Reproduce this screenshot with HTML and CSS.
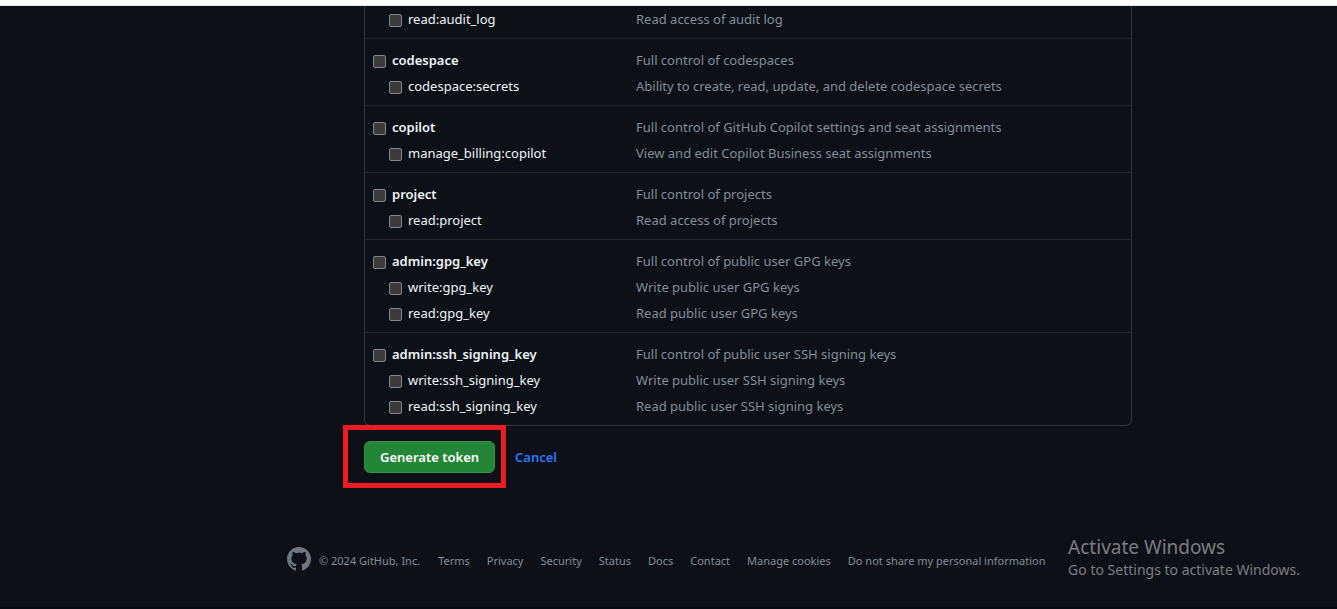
FILE: index.html
```html
<!DOCTYPE html>
<html lang="en">
<head>
<meta charset="utf-8">
<meta name="viewport" content="width=device-width, initial-scale=1">
<title>New personal access token</title>
<link rel="stylesheet" href="styles.css">
</head>
<body>
<div class="topbar"></div>
<main class="content">
<form class="token-form">
<div class="scopes">
<section class="group">
<div class="scope child"><label class="name"><input class="check" type="checkbox">read:audit_log</label><span class="desc">Read access of audit log</span></div>
</section>
<section class="group">
<div class="scope"><label class="name"><input class="check" type="checkbox">codespace</label><span class="desc">Full control of codespaces</span></div>
<div class="scope child"><label class="name"><input class="check" type="checkbox">codespace:secrets</label><span class="desc">Ability to create, read, update, and delete codespace secrets</span></div>
</section>
<section class="group">
<div class="scope"><label class="name"><input class="check" type="checkbox">copilot</label><span class="desc">Full control of GitHub Copilot settings and seat assignments</span></div>
<div class="scope child"><label class="name"><input class="check" type="checkbox">manage_billing:copilot</label><span class="desc">View and edit Copilot Business seat assignments</span></div>
</section>
<section class="group">
<div class="scope"><label class="name"><input class="check" type="checkbox">project</label><span class="desc">Full control of projects</span></div>
<div class="scope child"><label class="name"><input class="check" type="checkbox">read:project</label><span class="desc">Read access of projects</span></div>
</section>
<section class="group">
<div class="scope"><label class="name"><input class="check" type="checkbox">admin:gpg_key</label><span class="desc">Full control of public user GPG keys</span></div>
<div class="scope child"><label class="name"><input class="check" type="checkbox">write:gpg_key</label><span class="desc">Write public user GPG keys</span></div>
<div class="scope child"><label class="name"><input class="check" type="checkbox">read:gpg_key</label><span class="desc">Read public user GPG keys</span></div>
</section>
<section class="group">
<div class="scope"><label class="name"><input class="check" type="checkbox">admin:ssh_signing_key</label><span class="desc">Full control of public user SSH signing keys</span></div>
<div class="scope child"><label class="name"><input class="check" type="checkbox">write:ssh_signing_key</label><span class="desc">Write public user SSH signing keys</span></div>
<div class="scope child"><label class="name"><input class="check" type="checkbox">read:ssh_signing_key</label><span class="desc">Read public user SSH signing keys</span></div>
</section>
</div>
<div class="actions">
<div class="highlight"><button class="generate" type="button">Generate token</button></div>
<a class="cancel" href="#">Cancel</a>
</div>
</form>
</main>
<footer class="footer">
<svg class="logo" viewBox="0 0 16 16" aria-label="GitHub" role="img"><path d="M8 0c4.42 0 8 3.58 8 8a8.013 8.013 0 0 1-5.45 7.59c-.4.08-.55-.17-.55-.38 0-.27.01-1.13.01-2.2 0-.75-.25-1.23-.54-1.48 1.78-.2 3.65-.88 3.65-3.95 0-.88-.31-1.59-.82-2.15.08-.2.36-1.02-.08-2.12 0 0-.67-.22-2.2.82-.64-.18-1.32-.27-2-.27-.68 0-1.36.09-2 .27-1.53-1.03-2.2-.82-2.2-.82-.44 1.1-.16 1.92-.08 2.12-.51.56-.82 1.28-.82 2.15 0 3.06 1.86 3.75 3.64 3.95-.23.2-.44.55-.51 1.07-.46.21-1.61.55-2.33-.66-.15-.24-.6-.83-1.23-.82-.67.01-.27.38.01.53.34.19.73.9.82 1.13.16.45.68 1.31 2.69.94 0 .67.01 1.3.01 1.49 0 .21-.15.45-.55.38A7.995 7.995 0 0 1 0 8c0-4.42 3.58-8 8-8Z"/></svg>
<span class="copyright">© 2024 GitHub, Inc.</span>
<nav class="links">
<a class="link" href="#">Terms</a>
<a class="link" href="#">Privacy</a>
<a class="link" href="#">Security</a>
<a class="link" href="#">Status</a>
<a class="link" href="#">Docs</a>
<a class="link" href="#">Contact</a>
<a class="link" href="#">Manage cookies</a>
<a class="link" href="#">Do not share my personal information</a>
</nav>
</footer>
<aside class="watermark">
<div class="watermark-title">Activate Windows</div>
<div class="watermark-text">Go to Settings to activate Windows.</div>
</aside>
</body>
</html>
```
FILE: styles.css
```css
* {
  box-sizing: border-box;
}

body {
  margin: 0;
  min-height: 100vh;
  background: #0d1117;
  border-bottom: 2px solid #07090f;
  color: #f0f4f8;
  font: 13px/26px "Noto Sans", "Open Sans", sans-serif;
}

.topbar {
  height: 6px;
  background: #fff;
  border-bottom: 1px solid #dce8de;
}

.content {
  margin: 0 205px 0 364px;
}

.scopes {
  border: 1px solid #30363d;
  border-top: 0;
  border-radius: 0 0 6px 6px;
}

.group {
  padding: 8px 8px 6px;
  border-top: 1px solid #21262d;
}

.group:first-child {
  padding-top: 0;
  border-top: 0;
}

.scope {
  display: grid;
  grid-template-columns: 263px 1fr;
}

.name {
  display: flex;
  align-items: center;
  gap: 6px;
  font-weight: 600;
}

.child .name {
  padding-left: 16px;
  font-weight: 400;
}

.check {
  appearance: none;
  width: 13px;
  height: 13px;
  margin: 2px 0 0;
  border: 1px solid #858585;
  border-radius: 2px;
  background: #3b3b3b;
}

.desc {
  color: #848d97;
}

.actions {
  display: flex;
  align-items: center;
  gap: 9px;
  margin: -1px 0 0 -21px;
}

.highlight {
  padding: 11px 6px 10px 16px;
  border: 5px solid #ed1c24;
}

.generate {
  display: block;
  height: 32px;
  padding: 0 15px;
  border: 1px solid #36914a;
  border-radius: 6px;
  background: #238636;
  color: #fff;
  font: inherit;
  font-weight: 600;
  line-height: 20px;
}

.cancel {
  color: #2878fa;
  font-weight: 600;
  text-decoration: none;
}

.footer {
  display: flex;
  align-items: flex-start;
  margin: 59px 0 0 287px;
  color: #848d97;
  font-size: 11px;
  line-height: 24px;
  white-space: nowrap;
}

.logo {
  width: 24px;
  height: 24px;
  margin-right: 8px;
  fill: #6e7681;
}

.copyright,
.links {
  padding-top: 2px;
}

.links {
  display: flex;
  gap: 17px;
  margin-left: 18px;
}

.link {
  color: inherit;
  text-decoration: none;
}

.watermark {
  position: absolute;
  right: 37px;
  bottom: 29px;
  color: #7c7d80;
  font-size: 14px;
  line-height: 20px;
}

.watermark-title {
  font-size: 19px;
  line-height: 25px;
}
```
